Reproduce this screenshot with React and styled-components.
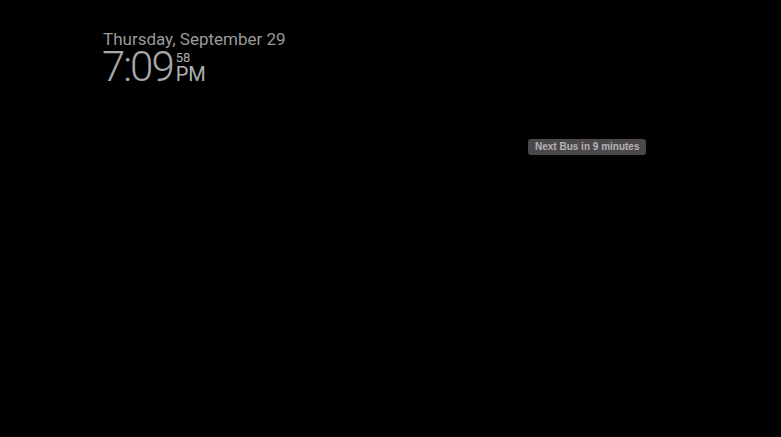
import React from 'react';
import styled, { createGlobalStyle } from 'styled-components';

const GlobalStyle = createGlobalStyle`
    html, body {
        margin: 0;
        padding: 0;
        background: #000;
        height: 100%;
    }
    #root {
        height: 100%;
    }
`;

const Screen = styled.div`
    width: 781px;
    height: 437px;
    background: #000;
    display: flex;
    flex-direction: column;
    overflow: hidden;
`;

const ClockBlock = styled.div`
    display: flex;
    flex-direction: column;
    padding: 30px 0 0 102px;
`;

const DateText = styled.div`
    font-family: Roboto, 'Noto Sans', sans-serif;
    font-size: 17px;
    line-height: 18px;
    color: #9a9a9a;
    padding-left: 1px;
`;

const TimeRow = styled.div`
    display: flex;
    align-items: flex-end;
`;

const TimeMain = styled.div`
    font-family: Roboto, 'Noto Sans', sans-serif;
    font-weight: 300;
    font-size: 42px;
    line-height: 37px;
    letter-spacing: -2px;
    color: #a8a8a8;
`;

const TimeSide = styled.div`
    display: flex;
    flex-direction: column;
    margin: 0 0 3px 3px;
    font-family: Roboto, 'Noto Sans', sans-serif;
    color: #b0b0b0;
`;

const Seconds = styled.span`
    font-size: 13px;
    line-height: 12px;
    margin-bottom: 2px;
`;

const Meridiem = styled.span`
    font-size: 20px;
    line-height: 16px;
`;

const BusRow = styled.div`
    display: flex;
    padding: 54px 0 0 528px;
`;

const BusBadge = styled.div`
    background: #4b474b;
    color: #b4b4b4;
    font-family: 'Liberation Sans', Arial, sans-serif;
    font-weight: bold;
    font-size: 10px;
    line-height: 16px;
    height: 16px;
    padding: 0 7px;
    border-radius: 3px;
`;

const App = () => {
    return (
        <Screen>
            <GlobalStyle />
            <ClockBlock>
                <DateText>Thursday, September 29</DateText>
                <TimeRow>
                    <TimeMain>7:09</TimeMain>
                    <TimeSide>
                        <Seconds>58</Seconds>
                        <Meridiem>PM</Meridiem>
                    </TimeSide>
                </TimeRow>
            </ClockBlock>
            <BusRow>
                <BusBadge>Next Bus in 9 minutes</BusBadge>
            </BusRow>
        </Screen>
    );
};

export default App;
